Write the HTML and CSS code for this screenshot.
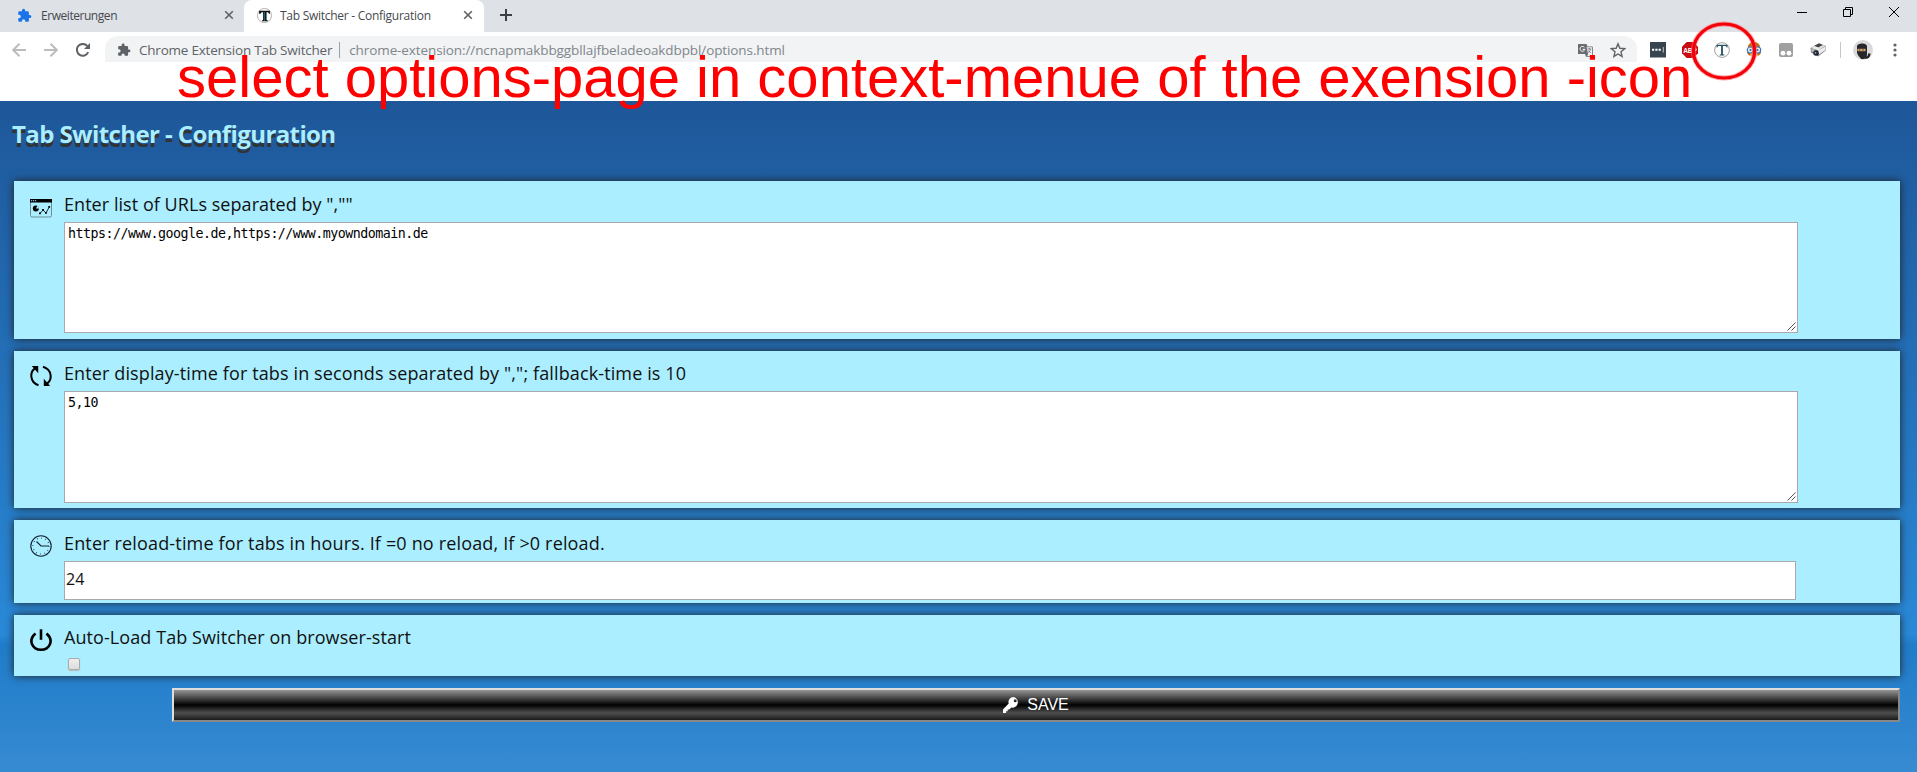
FILE: index.html
```html
<!DOCTYPE html>
<html lang="de">
<head>
<meta charset="utf-8">
<title>Tab Switcher - Configuration</title>
<link rel="stylesheet" href="styles.css">
</head>
<body>
<div class="window">
  <div class="tabstrip">
    <div class="tab tab-first">
      <svg class="tab-icon" viewBox="0 0 24 24"><path fill="#1a73e8" d="M20.5 11H19V7a2 2 0 0 0-2-2h-4V3.500a2.500 2.500 0 0 0-5 0V5H4a2 2 0 0 0-2 2v3.800h1.500a2.700 2.700 0 0 1 0 5.400H2V20a2 2 0 0 0 2 2h3.800v-1.500a2.700 2.700 0 0 1 5.400 0V22H17a2 2 0 0 0 2-2v-4h1.500a2.500 2.500 0 0 0 0-5z"/></svg>
      <span class="tab-title t-ext">Erweiterungen</span>
      <svg class="tab-close" viewBox="0 0 10 10"><path d="M1.200 1.200l7.600 7.600M8.800 1.200L1.200 8.800"/></svg>
    </div>
    <div class="tab tab-active">
      <svg class="tab-icon tee" viewBox="0 0 16 16"><circle cx="8" cy="8" r="7.500" fill="#fff" stroke="#999" stroke-width=".8"/><path d="M2.200 2.800h11.600v3.400h-1c-.2-1.300-.8-1.800-2-1.800h-.6v8.300l1.300.6v.9H5.300v-.9l1.200-.6V4.400h-.8c-1.200 0-1.800.5-2 1.800H2.200z" fill="#111"/><path d="M7.300 4.200h1.400v9.400H7.300z" fill="#0e6b7c"/></svg>
      <span class="tab-title t-conf">Tab Switcher - Configuration</span>
      <svg class="tab-close" viewBox="0 0 10 10"><path d="M1.200 1.200l7.600 7.600M8.800 1.200L1.200 8.800"/></svg>
    </div>
    <svg class="new-tab" viewBox="0 0 12 12"><path d="M6 0v12M0 6h12"/></svg>
    <div class="window-controls">
      <svg viewBox="0 0 10 10"><path d="M0 5.500h10"/></svg>
      <svg viewBox="0 0 10 10"><path d="M.5 2.500h7v7h-7zM2.500 2.500v-2h7v7h-2"/></svg>
      <svg viewBox="0 0 10 10"><path d="M0 0l10 10M10 0L0 10"/></svg>
    </div>
  </div>
  <div class="toolbar">
    <svg class="nav nav-off" viewBox="0 0 14 14"><path d="M14 7H1M7.500.8L1.200 7l6.300 6.200"/></svg>
    <svg class="nav nav-off" viewBox="0 0 14 14"><path d="M0 7h13M6.500.8L12.800 7l-6.300 6.200"/></svg>
    <svg class="nav" viewBox="0 0 14 14"><path d="M12.200 9.200A5.900 5.900 0 1 1 11.300 3"/><path d="M14 0v6H8z" class="solid"/></svg>
    <div class="address">
      <svg class="site-icon" viewBox="0 0 24 24"><path fill="#5f6368" d="M20.500 11H19V7a2 2 0 0 0-2-2h-4V3.500a2.500 2.500 0 0 0-5 0V5H4a2 2 0 0 0-2 2v3.800h1.500a2.700 2.700 0 0 1 0 5.400H2V20a2 2 0 0 0 2 2h3.800v-1.500a2.700 2.700 0 0 1 5.400 0V22H17a2 2 0 0 0 2-2v-4h1.500a2.500 2.500 0 0 0 0-5z"/></svg>
      <span class="site-name">Chrome Extension Tab Switcher</span>
      <span class="divider"></span>
      <span class="url">chrome-extension://ncnapmakbbggbllajfbeladeoakdbpbl/options.html</span>
      <svg class="translate" viewBox="0 0 15 15"><path d="M0 1h8.500l1 2.500H14a.8.8 0 0 1 .8.800V13a.8.8 0 0 1-.8.800H8L7 11H0z" fill="#6a6e73"/><path d="M8.500 4.200H14v8.900H9.200l1-2.100z" fill="#f1f3f4"/><path d="M6.300 4.300a2.400 2.400 0 1 0 .5 2H4.700" fill="none" stroke="#fff"/><path d="M9.300 6h4M11.300 5v1M12.500 6c-.3 1.800-1.500 3-2.600 3.700M10.500 7.500l2.300 2.500" fill="none" stroke="#6a6e73" stroke-width=".8"/></svg>
      <svg class="star" viewBox="0 0 24 24"><path d="M12 2.800l2.800 6.600 7.100.6-5.400 4.700 1.600 7L12 18l-6.100 3.700 1.600-7L2.100 10l7.100-.6z"/></svg>
    </div>
    <div class="extensions">
      <svg viewBox="0 0 16 16"><path d="M0 0h16v15.500H0z" fill="#36454f"/><path d="M2 6.700h2.200v2H2zM5.300 6.700h2.200v2H5.300zM8.600 6.700h2.200v2H8.600z" fill="#fff"/><path d="M13.300 5v5.500" stroke="#fff" stroke-width=".7"/></svg>
      <svg viewBox="0 0 16 16"><path d="M4.700 0h6.600L16 4.700v6.600L11.300 16H4.700L0 11.300V4.700z" fill="#c70d12"/><text x="8" y="10.800" class="abp">ABP</text></svg>
      <svg viewBox="0 0 16 16"><circle cx="8" cy="8" r="7.400" fill="#fff" stroke="#777" stroke-width=".7"/><path d="M2.500 2.800h11v2.800h-.7c-.3-1.200-.8-1.700-1.800-1.700H8.900v8.300l1.500.5v.7H5.600v-.7l1.500-.5V3.900H5c-1 0-1.500.5-1.800 1.700h-.7z" fill="#24535c"/></svg>
      <svg viewBox="0 0 16 16"><path d="M2 5a6 5 0 0 1 12 0l1 6-2 2.500H3L1 11z" fill="#bd6c19"/><path d="M4.500 8h7v6.500h-7z" fill="#f1b77c"/><circle cx="4.300" cy="8" r="3" fill="#eee" stroke="#3f78bd" stroke-width="1.200"/><circle cx="11.700" cy="8" r="3" fill="#eee" stroke="#3f78bd" stroke-width="1.200"/><circle cx="4.500" cy="8" r="1.100" fill="#2465b0"/><circle cx="11.500" cy="8" r="1.100" fill="#2465b0"/><path d="M6.500 12.500h3" stroke="#c4483e"/></svg>
      <svg viewBox="0 0 16 16"><rect x="1" y="1" width="14" height="14" rx="2" fill="#a0a0a0"/><circle cx="5" cy="11.200" r="2.400" fill="#fff"/><circle cx="11" cy="11.200" r="2.400" fill="#fff"/></svg>
      <svg viewBox="0 0 16 16"><path d="M.5 6L9 1.300 15.700 4v4.500L8 14.500 6 13l-5-2.500z" fill="#777"/><path d="M1 6l3.500-2 6 2.300-2 2.200z" fill="#eee"/><path d="M4.500 3.800L9 1.500l4 1.500-4.500 2.300z" fill="#444"/><path d="M8.500 5.300L13 3l2.500 1-6.500 4z" fill="#ddd"/><path d="M8 8.500L15.500 4.500V8L9 12.500z" fill="#eee"/><path d="M1 6.500l6.500 2v3.500L1.500 9.500z" fill="#bbb"/><circle cx="6" cy="11" r="2.700" fill="#1d2230"/><circle cx="5.600" cy="10.800" r=".9" fill="#aac"/></svg>
      <span class="ext-divider"></span>
      <svg class="avatar" viewBox="0 0 20 20"><circle cx="10" cy="10" r="10" fill="#dadada"/><path d="M4 7a5 3 0 0 1 10-1v8c0 3-1 4-3 5H8c-1-2-4-4-4-7z" fill="#25272b"/><path d="M4.500 8.800h8v2.400h-8z" fill="#dfa873"/><path d="M6 10h1.300M9.300 10h1.300" stroke="#222"/><path d="M12 17.500c3 .5 4-1 4.500-4" fill="none" stroke="#25272b" stroke-width="2.400"/></svg>
      <svg class="menu" viewBox="0 0 4 14"><circle cx="2" cy="2" r="1.600"/><circle cx="2" cy="7" r="1.600"/><circle cx="2" cy="12" r="1.600"/></svg>
    </div>
  </div>
  <main class="page">
    <h1 class="heading"><span>Tab Switcher - Configuration</span></h1>
    <section class="card card-urls">
      <svg class="card-icon" viewBox="0 0 22 22"><path d="M.5 3.500h21v16a1.500 1.500 0 0 1-1.500 1.500H2a1.500 1.500 0 0 1-1.500-1.500z" fill="none" stroke="#6c8f97"/><path d="M0 3h22v3.500H0z"/><path d="M1 4.700h1.200M3 4.700h1.200M5 4.700h1.200" stroke="#aef"/><circle cx="5.800" cy="12.500" r="3"/><path d="M6 12.500h3.500L7.500 9.500z" fill="#aef"/><path d="M10 17.500l3-3.500 3 3 3.500-6.500" fill="none" stroke="#000" stroke-width=".8"/><path d="M9 16.500h1.800v1.800H9zM12.200 13h1.800v1.800h-1.800zM15 16h1.800v1.800H15zM18.300 10h1.800v1.800h-1.800z"/></svg>
      <div class="field">
        <label class="label l1">Enter list of URLs separated by ",""</label>
        <div class="area">https://www.google.de,https://www.myowndomain.de<svg class="grip" viewBox="0 0 9 9"><path d="M.5 8.500l8-8M4.500 8.500l4-4"/></svg></div>
      </div>
    </section>
    <section class="card card-times">
      <svg class="card-icon" viewBox="0 0 22 22"><path d="M8.500 20.300C-.5 17.500-.5 6.500 5.500 3.200M13 1.700C22.500 4.500 22.500 15.500 16.500 18.800" fill="none" stroke="#000" stroke-width="2"/><path d="M1.800 1h6.400v7.200zM20.200 21h-6.400v-7.200z"/></svg>
      <div class="field">
        <label class="label l2">Enter display-time for tabs in seconds separated by ","; fallback-time is 10</label>
        <div class="area area-tall">5,10<svg class="grip" viewBox="0 0 9 9"><path d="M.5 8.500l8-8M4.500 8.500l4-4"/></svg></div>
      </div>
    </section>
    <section class="card card-input">
      <svg class="card-icon" viewBox="0 0 22 22"><circle cx="11" cy="11" r="10.200" fill="none" stroke="#123" stroke-width="1.100"/><path d="M6.500 6.500L11 11h8" fill="none" stroke="#123" stroke-width="1.100"/><circle cx="11" cy="11" r="8" fill="none" stroke="#123" stroke-width="1.200" stroke-dasharray=".7 3.489"/></svg>
      <div class="field">
        <label class="label l3">Enter reload-time for tabs in hours. If =0 no reload, If &gt;0 reload.</label>
        <div class="number">24</div>
      </div>
    </section>
    <section class="card card-check">
      <svg class="card-icon" viewBox="0 0 22 22"><path d="M5.500 4.500C-2.500 11.500 2.500 20.700 11 20.700S24.500 11.500 16.500 4.500" fill="none" stroke="#000" stroke-width="2.600"/><path d="M11 .3v10.500" stroke="#000" stroke-width="2.600"/></svg>
      <div class="field">
        <label class="label l4">Auto-Load Tab Switcher on browser-start</label>
        <span class="checkbox"></span>
      </div>
    </section>
    <div class="save"><svg class="key" viewBox="0 0 16 16"><path fill-rule="evenodd" d="M10.500 0a5 5 0 0 0-4.800 6.500L0 12.500V16h3v-1.700h1.700v-1.700h1.600l2-2A5.200 5.200 0 1 0 10.500 0zm1.700 2.300a1.500 1.500 0 1 1 0 3 1.500 1.500 0 0 1 0-3z"/></svg><span>SAVE</span></div>
  </main>
  <div class="note"><span>select options-page in context-menue of the exension -icon</span></div>
  <svg class="ring" viewBox="0 0 70 60"><ellipse class="halo" cx="35" cy="30" rx="30.600" ry="27"/><ellipse cx="35" cy="30" rx="30.600" ry="27"/></svg>
</div>
</body>
</html>
```

FILE: styles.css
```css
* { box-sizing: border-box; }
body { margin: 0; font-family: "Open Sans", "Noto Sans", sans-serif; }
svg { display: block; flex: none; }
.window { position: relative; width: 1917px; height: 772px; overflow: hidden; background: #fff; display: flex; flex-direction: column; }

.tabstrip { height: 32px; background: #dee1e6; display: flex; align-items: flex-start; flex: none; }
.tab { height: 32px; display: flex; align-items: center; font-size: 12px; padding-bottom: 2px; }
.tab-first { width: 247px; padding-left: 17px; background: #dee1e6; color: #45494d; }
.tab-active { width: 240px; padding-left: 13px; background: #fff; border-radius: 8px 8px 0 0; color: #45494d; margin-left: -3px; }
.tab-icon { width: 15px; height: 15px; margin-right: 9px; }
.tee { margin-right: 8px; }
.tab-title { white-space: nowrap; flex: none; }
.t-ext { letter-spacing: -.45px; }
.t-conf { letter-spacing: -.27px; }
.tab-close { width: 10px; height: 10px; margin-left: auto; margin-right: 13px; fill: none; stroke: #5f6368; stroke-width: 1.6; }
.tab-active .tab-close { margin-right: 11px; }
.new-tab { width: 12px; height: 12px; margin: 9px 0 0 16px; stroke: #3c4043; stroke-width: 2; }
.window-controls { margin-left: auto; display: flex; gap: 36px; padding: 7px 18px 0 0; }
.window-controls svg { width: 10px; height: 10px; fill: none; stroke: #000; stroke-width: 1; overflow: visible; }

.toolbar { height: 69px; display: flex; align-items: flex-start; padding: 4px 0 0 12px; flex: none; }
.nav { width: 14px; height: 14px; margin: 7px 18px 0 0; fill: none; stroke: #5f6368; stroke-width: 2; }
.nav .solid { fill: #5f6368; stroke: none; }
.nav-off { stroke: #babcbe; }
.nav + .address { margin-left: -3px; }
.address { width: 1532px; height: 26px; background: #f1f3f4; border-radius: 13px 13px 0 0; display: flex; align-items: center; padding: 2px 11px 0 12px; font-size: 13.5px; }
.site-icon { width: 14px; height: 14px; margin-right: 8px; }
.site-name { color: #5f6368; white-space: nowrap; letter-spacing: -.22px; }
.divider { width: 1px; height: 16px; background: #9aa0a6; margin: 0 9px 0 7px; }
.url { color: #80868b; white-space: nowrap; letter-spacing: -.1px; }
.translate { width: 15px; height: 15px; margin-left: auto; margin-right: 17px; }
.star { width: 16px; height: 16px; fill: none; stroke: #5f6368; stroke-width: 2.1; }
.extensions { display: flex; align-items: center; height: 28px; margin-left: 13px; gap: 16px; }
.extensions svg { width: 16px; height: 16px; }
.abp { font: bold 6.500px "Liberation Sans", sans-serif; fill: #fff; text-anchor: middle; }
.ext-divider { width: 1px; height: 16px; background: #c4c7ca; margin: 0 -4px 0 -2px; }
.extensions .avatar { width: 20px; height: 20px; }
.extensions .menu { width: 4px; height: 14px; fill: #5f6368; margin-left: 4px; }

.page { flex: 1; background: linear-gradient(to bottom, #1e5799 0, #2989d8 533px, #207cca 544px, #7db9e8 1066px); padding: 0 17px 0 14px; display: flex; flex-direction: column; gap: 12px; }
.heading { margin: 0; height: 68px; padding-top: 17px; font-size: 24px; line-height: 32px; font-weight: 700; letter-spacing: -.6px; color: #aef; text-shadow: 0 4px 0 #333; margin-left: -2px; white-space: nowrap; }
.card { background: #aef; box-shadow: 0 0 8px #222; display: flex; padding: 11px 0 0 15px; gap: 13px; flex: none; }
.card-urls { height: 158px; }
.card-times { height: 157px; padding-top: 10px; }
.card-input { height: 83px; }
.card-check { height: 61px; padding-top: 10px; }
.card-icon { width: 22px; height: 22px; margin: 4px -1px 0 1px; }
.field { display: flex; flex-direction: column; align-items: flex-start; }
.label { font-size: 18px; line-height: 24px; height: 30px; color: #111; white-space: nowrap; }
.l1 { letter-spacing: .05px; }
.l2 { letter-spacing: .12px; }
.l3 { letter-spacing: .16px; }
.l4 { letter-spacing: .08px; }
.area { position: relative; width: 1734px; height: 111px; background: #fff; border: 1px solid #a9a9a9; padding: 3px; font: 13.3px/16px "DejaVu Sans Mono", monospace; letter-spacing: -.51px; color: #000; }
.area-tall { height: 112px; }
.grip { position: absolute; right: 1px; bottom: 1px; width: 9px; height: 9px; fill: none; stroke: #555; stroke-width: 1; }
.number { width: 1732px; height: 39px; background: #fff; border: 1px solid #a9a9a9; padding: 0 1px; font: 16px/34px "Open Sans", sans-serif; color: #111; letter-spacing: .2px; }
.checkbox { width: 12px; height: 12px; margin: 3px 0 0 4px; border: 1px solid #aaa; border-radius: 2px; background: linear-gradient(#eee, #ddd); box-shadow: 0 1px 1px #bbb; }
.save { height: 34px; margin-left: 158px; border: 2px solid; border-color: #ddd #888 #888 #ddd; background: linear-gradient(#959595 0, #0d0d0d 46%, #010101 50%, #0a0a0a 53%, #4e4e4e 76%, #383838 87%, #1b1b1b 100%); display: flex; align-items: center; justify-content: center; gap: 8px; color: #fff; font: 16px "Liberation Sans", sans-serif; }
.key { width: 16px; height: 16px; fill: #fff; }

.note { position: absolute; left: 177px; top: 45px; font: 58px/64px "Liberation Sans", sans-serif; color: #f00; white-space: nowrap; }
.ring { position: absolute; left: 1689px; top: 21px; width: 70px; height: 60px; fill: none; stroke: #f4000a; stroke-width: 3.2; }
.ring .halo { stroke: #ff6a6a; stroke-width: 5; opacity: .6; }
```
